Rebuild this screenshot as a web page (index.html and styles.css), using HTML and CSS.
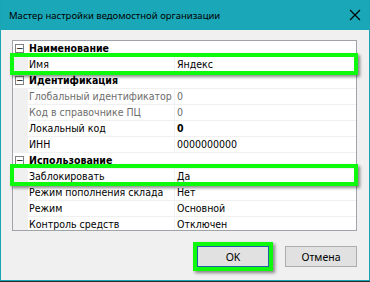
FILE: index.html
```html
<!DOCTYPE html>
<html lang="ru">
<head>
    <meta charset="UTF-8">
    <title>Мастер настройки ведомостной организации</title>
    <link rel="stylesheet" href="styles.css">
</head>
<body>
    <div class="window">
        <div class="title-bar">
            <span class="title">Мастер настройки ведомостной организации</span>
            <svg class="close" width="12" height="12" viewBox="0 0 12 12">
                <path d="M1 1 L11 11 M11 1 L1 11" stroke="#000" stroke-width="1.1" fill="none"/>
            </svg>
        </div>
        <div class="content">
            <div class="grid">
                <div class="row category">
                    <span class="gutter"><span class="toggle">−</span></span>
                    <span class="cat-name">Наименование</span>
                </div>
                <div class="row">
                    <span class="gutter"></span>
                    <span class="name">Имя</span>
                    <span class="value">Яндекс</span>
                </div>
                <div class="row category">
                    <span class="gutter"><span class="toggle">−</span></span>
                    <span class="cat-name">Идентификация</span>
                </div>
                <div class="row disabled">
                    <span class="gutter"></span>
                    <span class="name">Глобальный идентификатор</span>
                    <span class="value">0</span>
                </div>
                <div class="row disabled">
                    <span class="gutter"></span>
                    <span class="name">Код в справочнике ПЦ</span>
                    <span class="value">0</span>
                </div>
                <div class="row">
                    <span class="gutter"></span>
                    <span class="name">Локальный код</span>
                    <span class="value bold">0</span>
                </div>
                <div class="row">
                    <span class="gutter"></span>
                    <span class="name">ИНН</span>
                    <span class="value">0000000000</span>
                </div>
                <div class="row category">
                    <span class="gutter"><span class="toggle">−</span></span>
                    <span class="cat-name">Использование</span>
                </div>
                <div class="row">
                    <span class="gutter"></span>
                    <span class="name">Заблокировать</span>
                    <span class="value">Да</span>
                </div>
                <div class="row">
                    <span class="gutter"></span>
                    <span class="name">Режим пополнения склада</span>
                    <span class="value">Нет</span>
                </div>
                <div class="row">
                    <span class="gutter"></span>
                    <span class="name">Режим</span>
                    <span class="value">Основной</span>
                </div>
                <div class="row">
                    <span class="gutter"></span>
                    <span class="name">Контроль средств</span>
                    <span class="value">Отключен</span>
                </div>
            </div>
            <div class="buttons">
                <button class="btn default">OK</button>
                <button class="btn">Отмена</button>
            </div>
        </div>
        <div class="grip"></div>

        <!-- green marks drawn over the dialog -->
        <div class="mark mark-name"></div>
        <div class="mark mark-lock"></div>
        <div class="mark mark-ok"></div>
    </div>
</body>
</html>
```

FILE: styles.css
```css
body {
    margin: 0;
    padding: 0;
    background-color: #2b2b2b;
}

.window {
    position: relative;
    width: 368px;
    height: 280px;
    background-color: #f0f0f0;
    border: 1px solid #1aa5b5;
    border-top: none;
    font-family: "DejaVu Sans Condensed", "DejaVu Sans", Tahoma, sans-serif;
    font-size: 10.5px;
}

.title-bar {
    height: 30px;
    background-color: #1aa8b8;
    display: flex;
    align-items: center;
    justify-content: space-between;
    padding: 0 8px 0 8px;
}

.title {
    font-family: "Noto Sans", "Open Sans", sans-serif;
    font-size: 9.5px;
    color: #000;
}

.content {
    padding: 10px 12px 0 11px;
}

.grid {
    height: 189px;
    border: 1px solid #a0a3a8;
    background-color: #fff;
    overflow: hidden;
}

.row {
    display: flex;
    height: 15px;
    line-height: 14px;
    border-bottom: 1px solid #f0f0f0;
    white-space: nowrap;
}

.gutter {
    width: 15px;
    flex-shrink: 0;
    background-color: #f0f0f0;
    position: relative;
}

.category .gutter {
    background-color: #fff;
}

.toggle {
    position: absolute;
    left: 2px;
    top: 3px;
    width: 7px;
    height: 7px;
    border: 1px solid #808080;
    font-family: "DejaVu Sans", sans-serif;
    font-size: 9px;
    line-height: 7px;
    text-align: center;
    color: #000;
}

.cat-name {
    font-weight: bold;
    padding-left: 1px;
    color: #000;
}

.name {
    width: 145px;
    flex-shrink: 0;
    padding-left: 1px;
    border-right: 1px solid #f0f0f0;
    color: #000;
    overflow: hidden;
}

.value {
    padding-left: 2px;
    color: #000;
}

.value.bold {
    font-weight: bold;
}

.disabled .name,
.disabled .value {
    color: #6d6d6d;
}

.buttons {
    display: flex;
    justify-content: flex-end;
    gap: 16px;
    margin-top: 15px;
}

.btn {
    width: 72px;
    height: 21px;
    padding: 0;
    background-color: #e1e1e1;
    border: 1px solid #adadad;
    font-family: "Noto Sans", "Open Sans", sans-serif;
    font-size: 10.5px;
    color: #000;
}

.btn.default {
    border-color: #1f5fa8;
}

.grip {
    position: absolute;
    right: 2px;
    bottom: 2px;
    width: 6px;
    height: 6px;
    background-image: radial-gradient(circle, #a0a0a0 40%, transparent 45%);
    background-size: 2px 2px;
    clip-path: polygon(100% 0, 100% 100%, 0 100%);
}

.mark {
    position: absolute;
    border: 4px solid #0dfa0d;
    box-shadow: 2px 2px 3px rgba(0, 0, 0, 0.45);
}

.mark-name {
    left: 9px;
    top: 53px;
    width: 340px;
    height: 14px;
}

.mark-lock {
    left: 9px;
    top: 164px;
    width: 340px;
    height: 14px;
}

.mark-ok {
    left: 192px;
    top: 242px;
    width: 72px;
    height: 21px;
}
```
